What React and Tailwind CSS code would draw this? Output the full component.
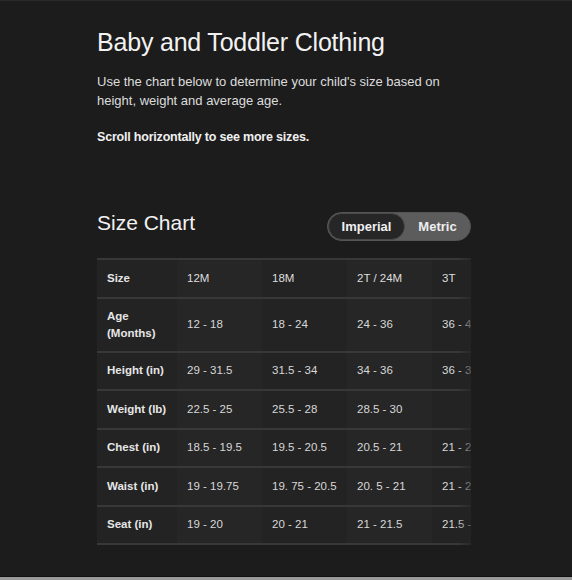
import React, { useState } from 'react';

const columns = ['12M', '18M', '2T / 24M', '3T'];

const rows = [
  { label: ['Age', '(Months)'], values: ['12 - 18', '18 - 24', '24 - 36', '36 - 48'] },
  { label: ['Height (in)'], values: ['29 - 31.5', '31.5 - 34', '34 - 36', '36 - 39'] },
  { label: ['Weight (lb)'], values: ['22.5 - 25', '25.5 - 28', '28.5 - 30', ''] },
  { label: ['Chest (in)'], values: ['18.5 - 19.5', '19.5 - 20.5', '20.5 - 21', '21 - 22'] },
  { label: ['Waist (in)'], values: ['19 - 19.75', '19. 75 - 20.5', '20. 5 - 21', '21 - 21.5'] },
  { label: ['Seat (in)'], values: ['19 - 20', '20 - 21', '21 - 21.5', '21.5 - 22'] },
];

const colBg = ['bg-[#232323]', 'bg-[#262626]', 'bg-[#232323]', 'bg-[#262626]', 'bg-[#232323]'];

export default function App() {
  const [unit, setUnit] = useState('imperial');

  return (
    <div className="h-[580px] flex flex-col bg-[#1c1c1c] border-t border-[#2a2a2a] text-[#ececec] font-['Liberation_Sans',Arial,sans-serif]">
      <div className="flex-1 ml-[97px] w-[374px]">
        <h1 className="mt-[26px] text-[25px] leading-[30px] tracking-[-0.2px] text-[#f2f2f2]">Baby and Toddler Clothing</h1>
        <p className="mt-[15px] text-[13px] leading-[19px] text-[#dcdcdc]">
          Use the chart below to determine your child's size based on height, weight and average age.
        </p>
        <p className="mt-[18px] text-[12.5px] leading-[19px] tracking-[-0.2px] font-bold text-[#f0f0f0]">Scroll horizontally to see more sizes.</p>

        <div className="mt-[65px] flex items-start justify-between">
          <h2 className="-mt-[1px] text-[21px] leading-[24px] text-[#f2f2f2]">Size Chart</h2>
          <div className="flex h-[29px] w-[144px] rounded-full border border-[#555] bg-[#5c5c5c] text-[13px] font-bold">
            <button
              onClick={() => setUnit('imperial')}
              className={`w-[77px] rounded-full ${unit === 'imperial' ? 'bg-[#262626] border border-[#4a4a4a] text-[#f0f0f0]' : 'text-[#eeeeee]'}`}
            >
              Imperial
            </button>
            <button
              onClick={() => setUnit('metric')}
              className={`flex-1 rounded-full ${unit === 'metric' ? 'bg-[#262626] border border-[#4a4a4a] text-[#f0f0f0]' : 'text-[#eeeeee]'}`}
            >
              Metric
            </button>
          </div>
        </div>

        <div className="mt-[17px] overflow-hidden relative">
          <table className="border-collapse text-[11.5px] text-left whitespace-nowrap">
            <thead>
              <tr className="border-y-2 border-[#383838]">
                <th className="w-[80px] min-w-[80px] h-[38.5px] pl-[10px] font-bold text-[#e6e6e6] bg-[#232323]">Size</th>
                {columns.map((c, i) => (
                  <th key={c} className={`w-[85px] min-w-[85px] pl-[10px] font-medium text-[#dedede] ${colBg[i + 1]}`}>{c}</th>
                ))}
              </tr>
            </thead>
            <tbody>
              {rows.map(row => (
                <tr key={row.label[0]} className="border-b-2 border-[#383838]">
                  <td className={`pl-[10px] font-bold text-[#e6e6e6] bg-[#232323] leading-[17px] ${row.label.length > 1 ? 'h-[54px]' : 'h-[38.5px]'}`}>
                    {row.label.map(l => <div key={l}>{l}</div>)}
                  </td>
                  {row.values.map((v, i) => (
                    <td key={i} className={`pl-[10px] font-medium text-[#d8d8d8] ${colBg[i + 1]}`}>{v}</td>
                  ))}
                </tr>
              ))}
            </tbody>
          </table>
          <div className="absolute right-0 top-0 bottom-0 w-[14px] bg-gradient-to-r from-transparent to-[#232323]/70" />
        </div>
      </div>
      <div className="h-px bg-[#111]" />
      <div className="h-[3px] bg-[#9a9a9a]" />
    </div>
  );
}
